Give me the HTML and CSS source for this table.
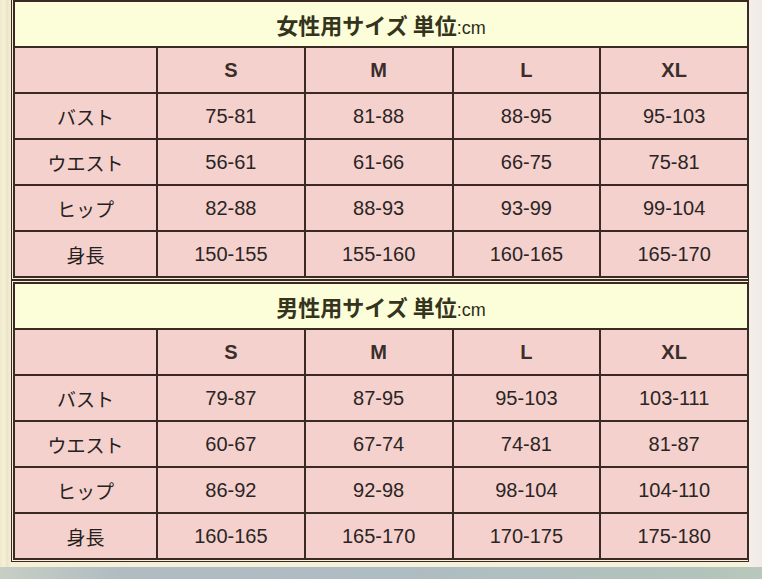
FILE: index.html
```html
<!DOCTYPE html>
<html lang="ja">
<head>
<meta charset="utf-8">
<title>サイズ表</title>
<link rel="stylesheet" href="styles.css">
</head>
<body>
<div class="page">
  <div class="chart chart-first">
    <table class="sizes">
      <colgroup><col class="c-label"><col class="c-size"><col class="c-size"><col class="c-size"><col class="c-size"></colgroup>
      <tr><th class="title" colspan="5">女性用サイズ 単位<span class="unit">:cm</span></th></tr>
      <tr class="head"><td></td><td>S</td><td>M</td><td>L</td><td>XL</td></tr>
      <tr><td class="label">バスト</td><td>75-81</td><td>81-88</td><td>88-95</td><td>95-103</td></tr>
      <tr><td class="label">ウエスト</td><td>56-61</td><td>61-66</td><td>66-75</td><td>75-81</td></tr>
      <tr><td class="label">ヒップ</td><td>82-88</td><td>88-93</td><td>93-99</td><td>99-104</td></tr>
      <tr><td class="label">身長</td><td>150-155</td><td>155-160</td><td>160-165</td><td>165-170</td></tr>
    </table>
  </div>
  <div class="chart">
    <table class="sizes">
      <colgroup><col class="c-label"><col class="c-size"><col class="c-size"><col class="c-size"><col class="c-size"></colgroup>
      <tr><th class="title" colspan="5">男性用サイズ 単位<span class="unit">:cm</span></th></tr>
      <tr class="head"><td></td><td>S</td><td>M</td><td>L</td><td>XL</td></tr>
      <tr><td class="label">バスト</td><td>79-87</td><td>87-95</td><td>95-103</td><td>103-111</td></tr>
      <tr><td class="label">ウエスト</td><td>60-67</td><td>67-74</td><td>74-81</td><td>81-87</td></tr>
      <tr><td class="label">ヒップ</td><td>86-92</td><td>92-98</td><td>98-104</td><td>104-110</td></tr>
      <tr><td class="label">身長</td><td>160-165</td><td>165-170</td><td>170-175</td><td>175-180</td></tr>
    </table>
  </div>
</div>
<div class="band"></div>
</body>
</html>
```

FILE: styles.css
```css
html, body {
  margin: 0;
  padding: 0;
}
body {
  width: 762px;
  height: 579px;
  overflow: hidden;
  background: linear-gradient(to right, #efe8cc 0, #f6f1d8 4px, #ece4c6 7px, #f5efd7 11px, #f6f1dc 749px, #f4eeea 750px, #f1ebe8 762px);
  font-family: "Liberation Sans", "Noto Sans CJK JP", sans-serif;
  color: #2a2525;
}
.page {
  padding-left: 11px;
  width: 738px;
}
.chart {
  border: 1px solid #3b2a22;
  padding: 1px;
  background: #f7f1dc;
}
.chart-first {
  margin-top: -2px;
}
.sizes {
  width: 734px;
  border-collapse: collapse;
  table-layout: fixed;
}
.c-label { width: 143px; }
.c-size { width: 147.75px; }
.sizes tr {
  height: 46px;
}
.sizes td,
.sizes th {
  border: 2px solid #3b2a22;
  padding: 0;
  text-align: center;
  vertical-align: middle;
  background: #f5d1cd;
  font-size: 20px;
  line-height: 1;
}
.sizes th.title {
  background: #fcfdd9;
  font-family: "Noto Sans CJK JP", sans-serif;
  font-weight: 700;
  font-size: 22px;
  color: #34331c;
  padding-top: 1px;
}
.unit {
  font-family: "Liberation Sans", sans-serif;
  font-weight: 400;
  font-size: 18px;
  color: #2e2d1a;
}
.head td {
  font-weight: 700;
  font-size: 20px;
  color: #3a2e2c;
}
.sizes td.label {
  font-family: "Noto Sans CJK JP", sans-serif;
  font-size: 19px;
  color: #262121;
}
.band {
  position: absolute;
  left: 0;
  top: 567px;
  width: 762px;
  height: 12px;
  background: linear-gradient(to right, #c7cec4 0, #b0bcc2 120px, #aebcc3 400px, #b2c3bb 700px, #b8c8bc 762px);
}
```
